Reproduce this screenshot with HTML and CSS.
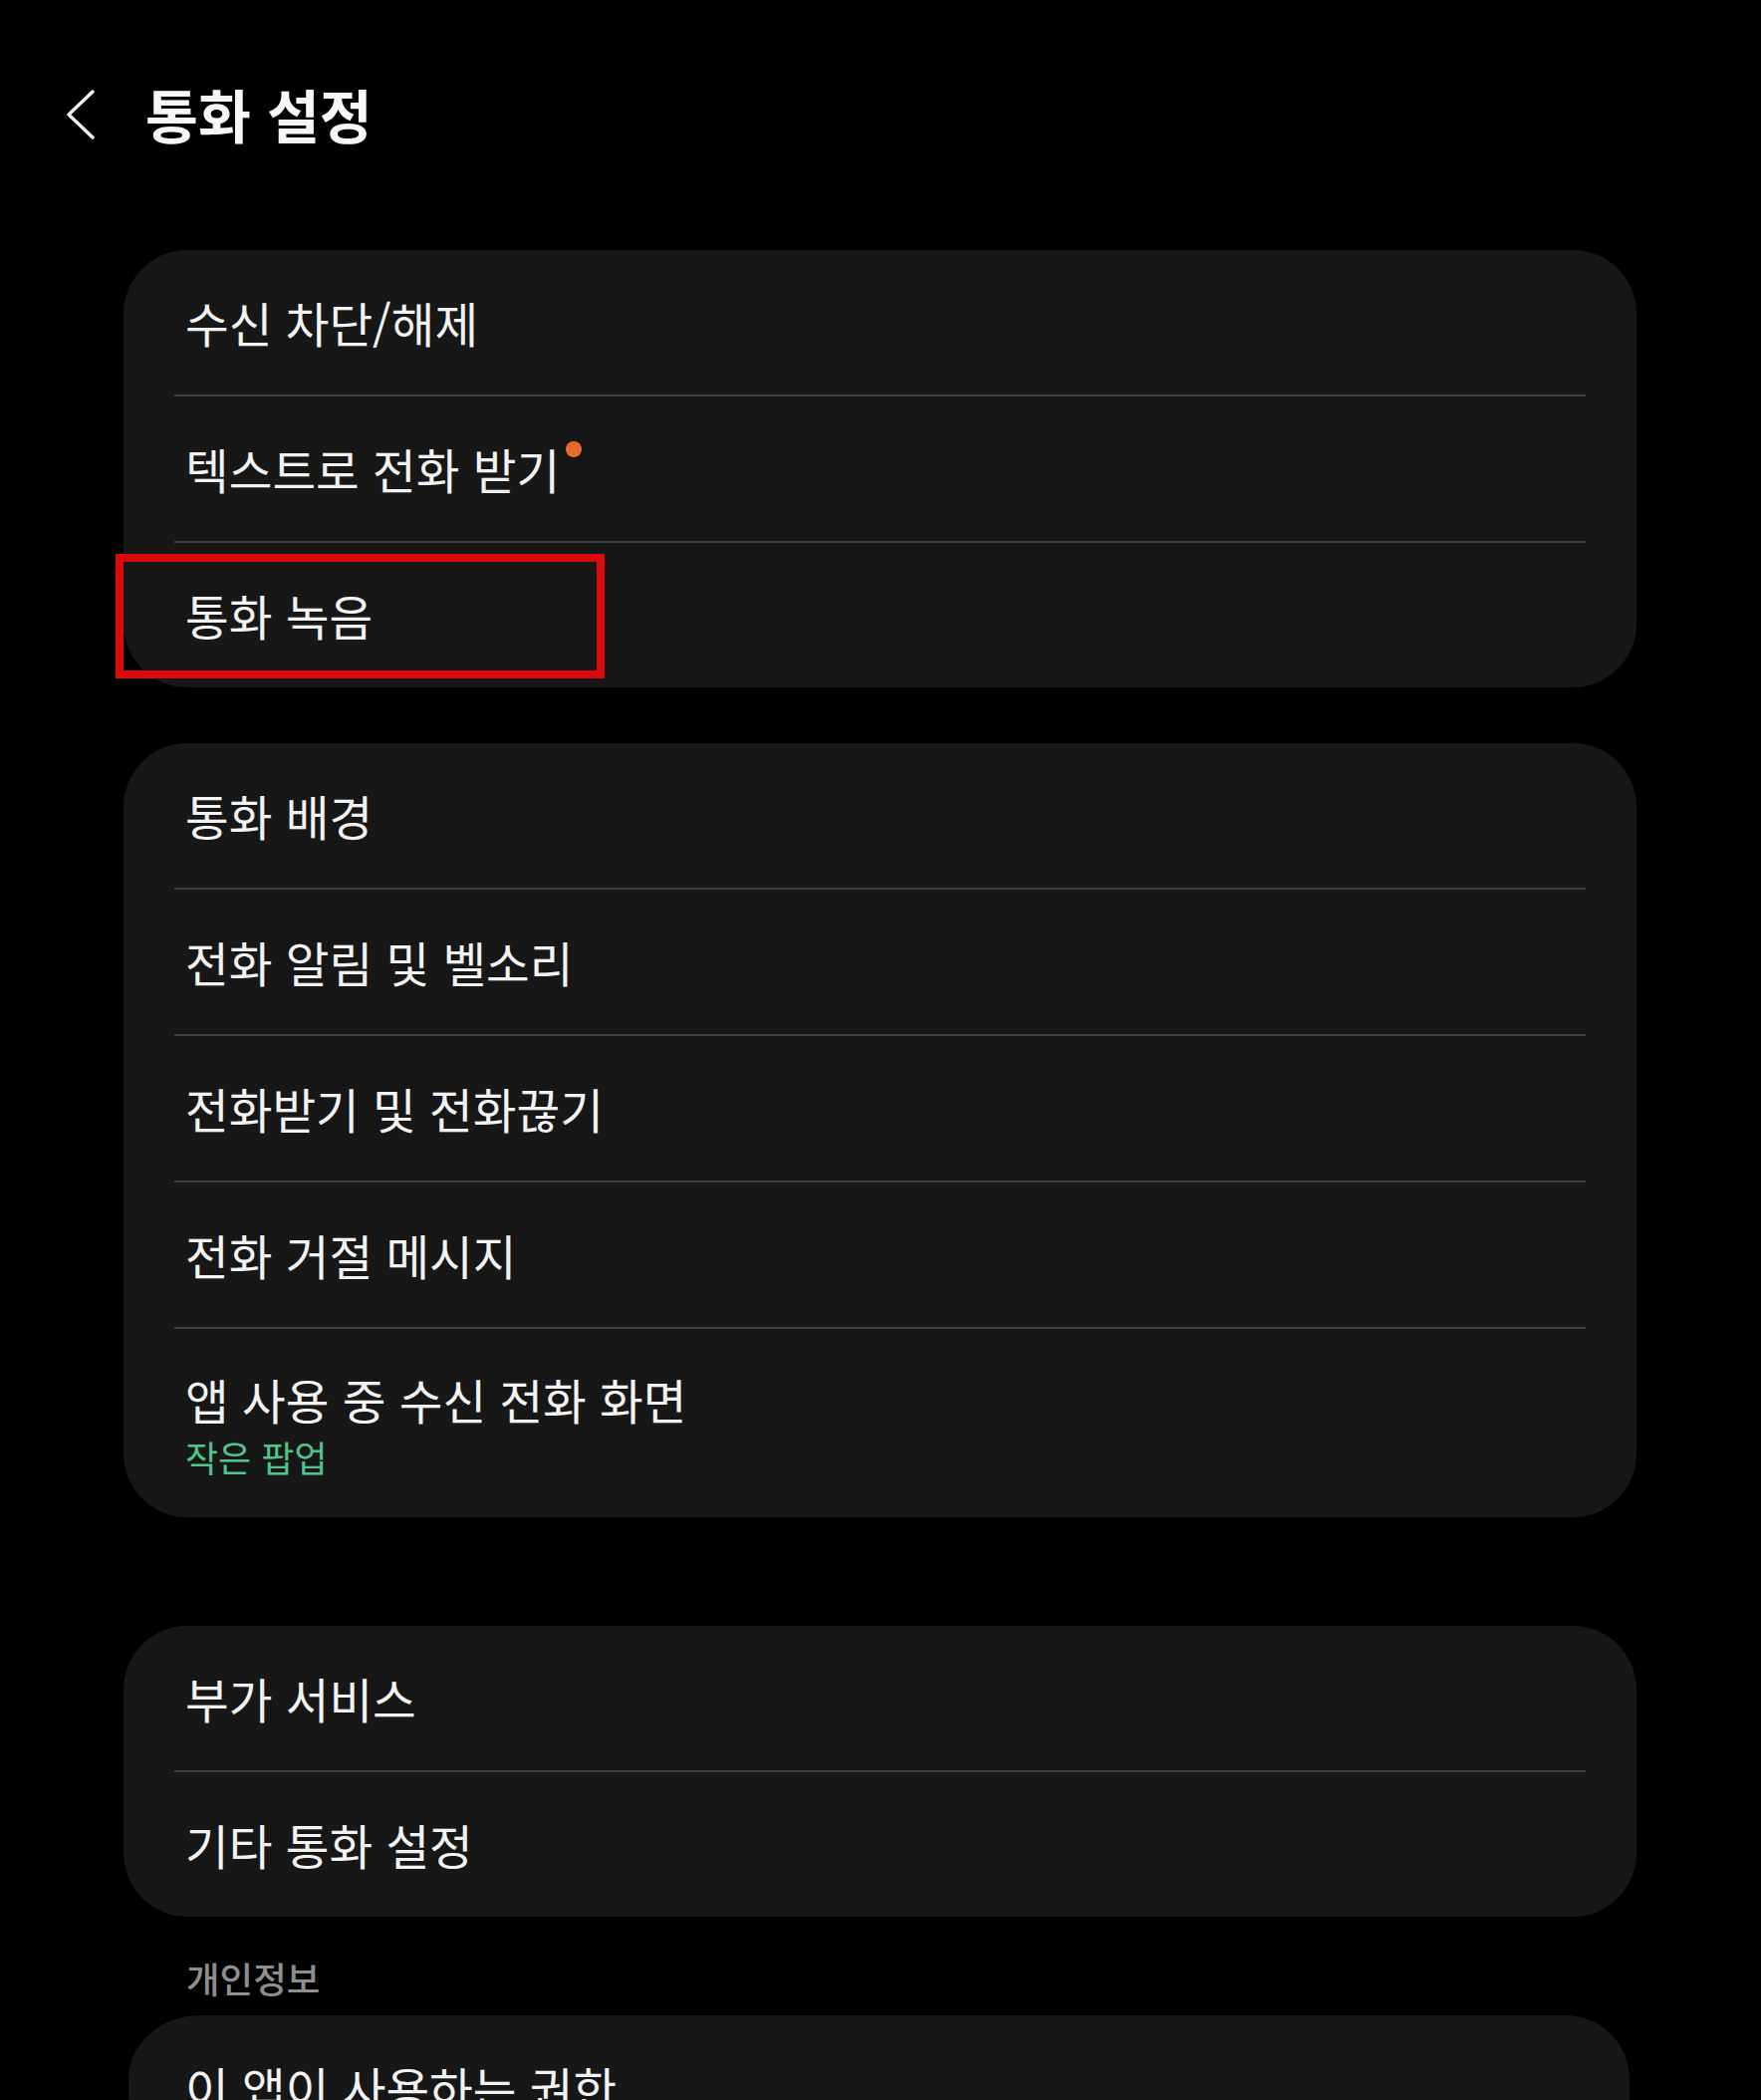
FILE: index.html
```html
<!DOCTYPE html>
<html lang="ko">
<head>
<meta charset="utf-8">
<title>통화 설정</title>
<link rel="stylesheet" href="styles.css">
</head>
<body>
<div class="page">
  <header class="topbar">
    <svg class="back" width="30" height="52" viewBox="0 0 30 52" aria-hidden="true">
      <path d="M27 4 L3 27 L27 50" fill="none" stroke="#f2f2f2" stroke-width="3.4" stroke-linecap="round" stroke-linejoin="round"/>
    </svg>
    <h1 class="title">통화 설정</h1>
  </header>

  <main class="list">
    <section class="card">
      <div class="row"><span class="label">수신 차단/해제</span></div>
      <div class="row"><span class="label">텍스트로 전화 받기<span class="dot"></span></span></div>
      <div class="row"><span class="label">통화 녹음</span></div>
    </section>

    <section class="card card-second">
      <div class="row"><span class="label">통화 배경</span></div>
      <div class="row"><span class="label">전화 알림 및 벨소리</span></div>
      <div class="row"><span class="label">전화받기 및 전화끊기</span></div>
      <div class="row"><span class="label">전화 거절 메시지</span></div>
      <div class="row row-tall">
        <div class="stack">
          <span class="label label-tall">앱 사용 중 수신 전화 화면</span>
          <span class="sub">작은 팝업</span>
        </div>
      </div>
    </section>

    <section class="card card-third">
      <div class="row"><span class="label">부가 서비스</span></div>
      <div class="row"><span class="label">기타 통화 설정</span></div>
    </section>

    <h2 class="section-title">개인정보</h2>

    <section class="card card-fourth">
      <div class="row"><span class="label">이 앱이 사용하는 권한</span></div>
    </section>
  </main>

  <div class="highlight" aria-hidden="true"></div>
</div>
</body>
</html>
```

FILE: styles.css
```css
html, body {
  margin: 0;
  padding: 0;
  background: #000000;
}

body {
  font-family: "Noto Sans CJK KR", "Noto Sans", sans-serif;
  color: #f2f2f2;
  overflow: hidden;
}

.page {
  position: relative;
  width: 1768px;
  height: 2108px;
  overflow: hidden;
}

.topbar {
  height: 251px;
  box-sizing: border-box;
  padding: 88px 0 0 66px;
  display: flex;
  align-items: flex-start;
}

.back {
  display: block;
  flex: none;
}

.title {
  margin: -6px 0 0 50px;
  font-size: 57.5px;
  line-height: 64px;
  font-weight: 700;
  color: #f7f7f7;
}

.list {
  padding: 0 125px 0 124px;
}

.card {
  background: #171717;
  border-radius: 64px;
  overflow: hidden;
}

.card-second {
  margin-top: 56px;
}

.card-third {
  margin-top: 109px;
}

.card-fourth {
  margin: 0 7px 0 5px;
  border-radius: 72px 64px 64px 72px / 64px;
}

.row {
  height: 145px;
  display: flex;
  align-items: center;
  padding-left: 62px;
  position: relative;
}

.card-fourth .row {
  padding-left: 57px;
}

.row + .row::before {
  content: "";
  position: absolute;
  top: -2px;
  left: 51px;
  right: 51px;
  height: 2px;
  background: #3e3e3e;
}

.row + .row {
  margin-top: 2px;
}

.row-tall {
  height: 189px;
}

.label {
  position: relative;
  font-size: 47.5px;
  line-height: 1.2;
  color: #f2f2f2;
  white-space: nowrap;
}

.stack {
  display: flex;
  flex-direction: column;
  padding-top: 2px;
}

.label-tall {
  line-height: 58px;
}

.sub {
  margin-top: 6px;
  font-size: 36px;
  line-height: 44px;
  color: #4fc48c;
  white-space: nowrap;
}

.dot {
  position: absolute;
  left: 100%;
  top: 1px;
  margin-left: 6px;
  width: 16px;
  height: 16px;
  border-radius: 50%;
  background: #ea6a2a;
}

.section-title {
  margin: 0;
  height: 99px;
  box-sizing: border-box;
  padding: 45px 0 0 63px;
  font-size: 36.5px;
  line-height: 34px;
  font-weight: 500;
  color: #8e8e8e;
}

.highlight {
  position: absolute;
  left: 116px;
  top: 556px;
  width: 491px;
  height: 125px;
  box-sizing: border-box;
  border: 8px solid #dc0b0b;
}
```
